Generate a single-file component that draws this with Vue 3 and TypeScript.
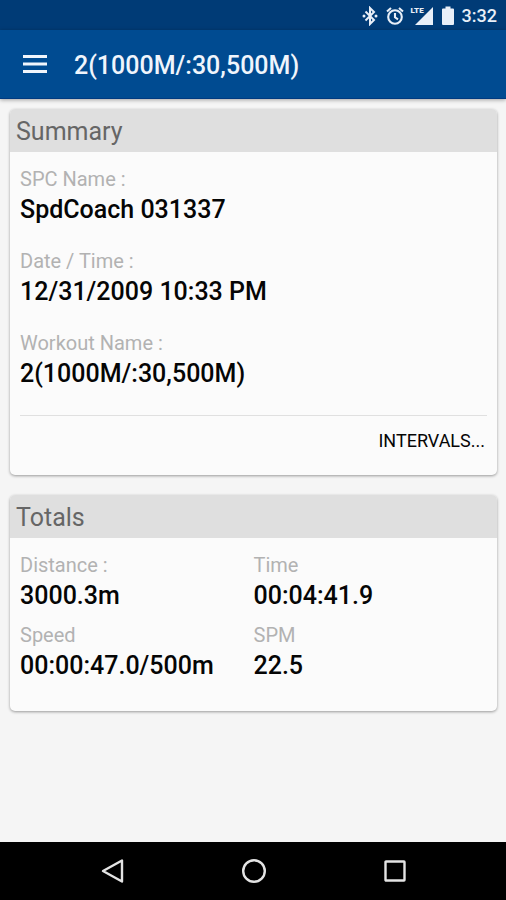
<script setup lang="ts">
interface Field {
  label: string
  value: string
}

const workout = '2(1000M/:30,500M)'

const summary: Field[] = [
  { label: 'SPC Name :', value: 'SpdCoach 031337' },
  { label: 'Date / Time :', value: '12/31/2009 10:33 PM' },
  { label: 'Workout Name :', value: workout },
]

const totals: Field[] = [
  { label: 'Distance :', value: '3000.3m' },
  { label: 'Time', value: '00:04:41.9' },
  { label: 'Speed', value: '00:00:47.0/500m' },
  { label: 'SPM', value: '22.5' },
]
</script>

<template>
  <div class="screen">
    <div class="status-bar">
      <svg width="16" height="20" viewBox="0 0 16 20" aria-hidden="true">
        <path d="M3.500 5.500 12 14 8 18V2l4 4-8.500 8.500" fill="none" stroke="currentColor" stroke-width="2" />
        <circle cx="2" cy="10" r="1.500" fill="currentColor" />
        <circle cx="14" cy="10" r="1.500" fill="currentColor" />
      </svg>
      <svg width="18" height="20" viewBox="0 0 18 20" aria-hidden="true">
        <g fill="none" stroke="currentColor" stroke-width="2.100">
          <circle cx="9" cy="11" r="6.800" />
          <path d="M1 5.500 5 2M17 5.500 13 2M9 7v4.300l3 2" />
        </g>
      </svg>
      <div class="signal">
        <svg width="22" height="20" viewBox="0 0 22 20" aria-hidden="true">
          <path d="M3 19 21 1v18z" fill="currentColor" />
        </svg>
        <span class="network">LTE</span>
      </div>
      <svg width="12" height="20" viewBox="0 0 12 20" aria-hidden="true">
        <path d="M3.500 0.500h5v2H11a1 1 0 0 1 1 1v14.500a1 1 0 0 1-1 1H1a1 1 0 0 1-1-1V3.500a1 1 0 0 1 1-1h2.500z" fill="currentColor" />
      </svg>
      <time class="clock">3:32</time>
    </div>

    <header class="app-bar">
      <button class="menu" type="button" aria-label="Menu">
        <svg width="24" height="18" viewBox="0 0 24 18" aria-hidden="true">
          <path d="M0 1.500h24M0 9h24M0 16.500h24" stroke="currentColor" stroke-width="2.800" />
        </svg>
      </button>
      <h1 class="title">{{ workout }}</h1>
    </header>

    <main class="content">
      <section class="card">
        <h2 class="card-head">Summary</h2>
        <dl class="fields summary">
          <div v-for="field in summary" :key="field.label">
            <dt>{{ field.label }}</dt>
            <dd>{{ field.value }}</dd>
          </div>
        </dl>
        <div class="actions">
          <button class="intervals" type="button">INTERVALS...</button>
        </div>
      </section>

      <section class="card">
        <h2 class="card-head">Totals</h2>
        <dl class="fields totals">
          <div v-for="field in totals" :key="field.label">
            <dt>{{ field.label }}</dt>
            <dd>{{ field.value }}</dd>
          </div>
        </dl>
      </section>
    </main>

    <nav class="nav-bar">
      <button type="button" aria-label="Back">
        <svg width="26" height="26" viewBox="0 0 26 26" aria-hidden="true">
          <path d="M22 2.500v21L3 13z" />
        </svg>
      </button>
      <button type="button" aria-label="Home">
        <svg width="26" height="26" viewBox="0 0 26 26" aria-hidden="true">
          <circle cx="13" cy="13" r="10.800" />
        </svg>
      </button>
      <button type="button" aria-label="Recent apps">
        <svg width="26" height="26" viewBox="0 0 26 26" aria-hidden="true">
          <rect x="3.500" y="3.500" width="19" height="19" rx="0.500" />
        </svg>
      </button>
    </nav>
  </div>
</template>

<style>
body {
  margin: 0;
  background: #f5f5f5;
}
</style>

<style scoped>
.screen {
  display: flex;
  flex-direction: column;
  min-height: 100vh;
  background: #f5f5f5;
  color: #050505;
  font-family: Roboto, sans-serif;
}

button {
  margin: 0;
  padding: 0;
  border: 0;
  background: none;
  color: inherit;
  font: inherit;
}

svg {
  display: block;
}

.status-bar {
  display: flex;
  align-items: center;
  justify-content: flex-end;
  gap: 8px;
  box-sizing: border-box;
  height: 30px;
  padding: 1px 9px 0 0;
  background: #003b76;
  color: #e9eff8;
}

.signal {
  position: relative;
}

.network {
  position: absolute;
  top: 0;
  left: -1px;
  background: #003b76;
  font-size: 8px;
  font-weight: 900;
  line-height: 9px;
}

.clock {
  font-size: 18px;
  font-weight: 500;
  line-height: 24px;
}

.app-bar {
  display: flex;
  align-items: center;
  gap: 27px;
  height: 68px;
  padding: 0 23px;
  border-bottom: 1px solid #003a80;
  box-shadow: 0 1px 4px rgb(0 0 0 / 35%);
  background: #004b91;
  color: #f0f5fc;
}

.title {
  margin: 0;
  padding-top: 4px;
  font-size: 25px;
  font-weight: 500;
  line-height: 32px;
}

.content {
  display: flex;
  flex: 1;
  flex-direction: column;
  gap: 20px;
  padding: 10px 9px 24px 10px;
}

.card {
  overflow: hidden;
  border-radius: 5px;
  background: #fbfbfb;
  box-shadow: 0 1px 3px rgb(0 0 0 / 38%);
}

.card-head {
  margin: 0;
  padding: 7px 6px 4px;
  background: #dfdfdf;
  color: #666;
  font-size: 25px;
  font-weight: 400;
  line-height: 32px;
}

.fields {
  display: grid;
  margin: 0;
  padding: 13px 10px 0;
}

.summary {
  row-gap: 22px;
}

.totals {
  grid-template-columns: 1fr 1fr;
  row-gap: 10px;
  padding-bottom: 30px;
}

dt {
  color: #b2b2b2;
  font-size: 20px;
  line-height: 28px;
}

dd {
  margin: 0;
  padding-top: 2px;
  font-size: 25px;
  font-weight: 500;
  line-height: 30px;
}

.actions {
  display: flex;
  justify-content: flex-end;
  margin: 26px 10px 0;
  padding: 9px 2px 18px;
  border-top: 1px solid #e0e0e0;
}

.intervals {
  font-size: 18px;
  line-height: 32px;
}

.nav-bar {
  display: flex;
  justify-content: center;
  height: 58px;
  padding-left: 2px;
  background: #000;
  color: #e4e4e4;
}

.nav-bar button {
  display: flex;
  flex: 0 0 28%;
  align-items: center;
  justify-content: center;
}

.nav-bar svg {
  fill: none;
  stroke: currentColor;
  stroke-width: 2.4px;
  stroke-linejoin: round;
}
</style>
